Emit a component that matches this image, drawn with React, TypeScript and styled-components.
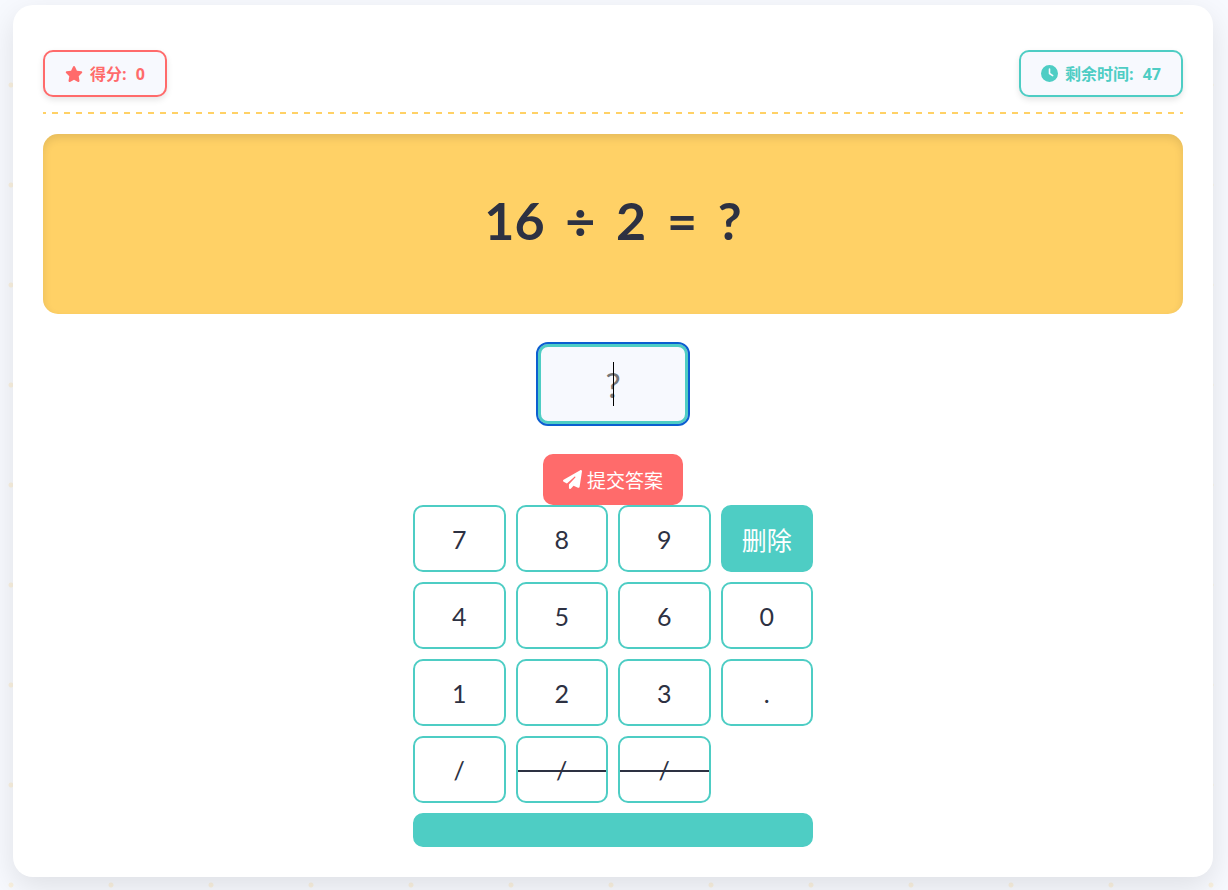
import React, { useState } from 'react';
import styled, { createGlobalStyle, css } from 'styled-components';
import { FaClock, FaPaperPlane, FaStar } from 'react-icons/fa6';

const coral = '#ff6b6b';
const teal = '#4ecdc4';
const yellow = '#ffd166';
const ink = '#2d3142';
const mist = '#f7f9fe';

const GlobalStyle = createGlobalStyle`
  *, *::before, *::after { box-sizing: border-box; }
  body {
    margin: 0;
    color: ${ink};
    font-family: Lato, "Noto Sans CJK SC", sans-serif;
    background: ${mist} radial-gradient(circle, rgba(255, 209, 102, 0.2) 2px, transparent 3px) -39px 35px / 100px 100px;
  }
  button, input { font-family: inherit; }
`;

const Page = styled.div`
  padding: 5px 15px 13px 13px;
`;

const Card = styled.main`
  max-width: 1200px;
  margin: 0 auto;
  padding: 30px;
  background: #fff;
  border-radius: 20px;
  box-shadow: 0 10px 30px rgba(0, 0, 0, 0.1);
`;

const Header = styled.header`
  display: flex;
  justify-content: space-between;
  align-items: center;
  padding: 15px 0 17px;
  margin-bottom: 20px;
  background: repeating-linear-gradient(90deg, ${yellow} 0 6px, transparent 6px 12px) -3px 100% / 100% 2px repeat-x;
`;

const Badge = styled.div<{ $tone: string }>`
  display: flex;
  align-items: center;
  gap: 7px;
  height: 47px;
  padding: 0 20px;
  color: ${({ $tone }) => $tone};
  font: 700 16px/24px "Open Sans", "Noto Sans CJK SC", sans-serif;
  background: ${mist};
  border: 2px solid currentColor;
  border-radius: 10px;
  box-shadow: 0 3px 6px rgba(0, 0, 0, 0.1);
`;

const Count = styled.span`
  margin-left: 5px;
`;

const Question = styled.section`
  display: flex;
  align-items: center;
  justify-content: center;
  min-height: 180px;
  padding-bottom: 8px;
  margin-bottom: 30px;
  background: ${yellow};
  border-radius: 15px;
  box-shadow: inset 0 4px 8px rgba(0, 0, 0, 0.1);
`;

const Equation = styled.h1`
  margin: 0;
  font-size: 52px;
  font-weight: 700;
  line-height: 64px;
`;

const Operator = styled.span`
  margin: 0 8px;
`;

const AnswerForm = styled.form`
  display: flex;
  flex-direction: column;
  align-items: center;
  gap: 30px;
`;

const AnswerField = styled.div`
  position: relative;
`;

const AnswerInput = styled.input`
  display: block;
  width: 150px;
  height: 80px;
  color: ${ink};
  font-size: 34px;
  text-align: center;
  caret-color: transparent;
  background: ${mist};
  border: 3px solid ${teal};
  border-radius: 10px;
  outline: 2px solid #0b5fd0;

  &::placeholder { color: #757575; }
`;

const Caret = styled.span`
  position: absolute;
  top: 18px;
  left: 50%;
  width: 1px;
  height: 44px;
  background: #000;
`;

const Submit = styled.button`
  display: flex;
  align-items: center;
  gap: 5px;
  height: 51px;
  padding: 0 20px;
  color: #fff;
  font-size: 19px;
  background: ${coral};
  border: 0;
  border-radius: 10px;
`;

const Keypad = styled.div`
  display: grid;
  grid-template-columns: repeat(4, 1fr);
  gap: 10px;
  max-width: 400px;
  margin: 0 auto;
`;

const Key = styled.button<{ $filled?: boolean; $struck?: boolean; $wide?: boolean }>`
  position: relative;
  height: 67px;
  padding: 0;
  color: ${ink};
  font-size: 25px;
  background: #fff;
  border: 2px solid ${teal};
  border-radius: 10px;

  ${({ $filled }) => $filled && css`
    color: #fff;
    background: ${teal};
  `}
  ${({ $wide }) => $wide && css`
    grid-column: 1 / -1;
    height: 34px;
  `}
  ${({ $struck }) => $struck && css`
    &::after {
      content: '';
      position: absolute;
      top: 32px;
      left: 0;
      right: 0;
      height: 2px;
      background: ${ink};
    }
  `}
`;

const keys: { label: string; filled?: boolean; struck?: boolean }[] = [
  { label: '7' }, { label: '8' }, { label: '9' }, { label: '删除', filled: true },
  { label: '4' }, { label: '5' }, { label: '6' }, { label: '0' },
  { label: '1' }, { label: '2' }, { label: '3' }, { label: '.' },
  { label: '/' }, { label: '/', struck: true }, { label: '/', struck: true },
];

export default function App() {
  const [answer, setAnswer] = useState('');

  const press = (label: string) =>
    setAnswer((value) => (label === '删除' ? value.slice(0, -1) : value + label));

  return (
    <Page>
      <GlobalStyle />
      <Card>
        <Header>
          <Badge $tone={coral}><FaStar size={18} /><span>得分: <Count>0</Count></span></Badge>
          <Badge $tone={teal}><FaClock size={17} /><span>剩余时间: <Count>47</Count></span></Badge>
        </Header>
        <Question>
          <Equation>16 <Operator>÷</Operator> 2 <Operator>=</Operator> ?</Equation>
        </Question>
        <AnswerForm onSubmit={(event) => event.preventDefault()}>
          <AnswerField>
            <AnswerInput
              aria-label="答案"
              placeholder="?"
              value={answer}
              onChange={(event) => setAnswer(event.target.value)}
            />
            {answer === '' && <Caret />}
          </AnswerField>
          <Submit type="submit"><FaPaperPlane size={19} />提交答案</Submit>
        </AnswerForm>
        <Keypad>
          {keys.map(({ label, filled, struck }, index) => (
            <Key key={index} type="button" $filled={filled} $struck={struck} onClick={() => press(label)}>
              {label}
            </Key>
          ))}
          <Key type="button" aria-label="确认" $filled $wide />
        </Keypad>
      </Card>
    </Page>
  );
}
